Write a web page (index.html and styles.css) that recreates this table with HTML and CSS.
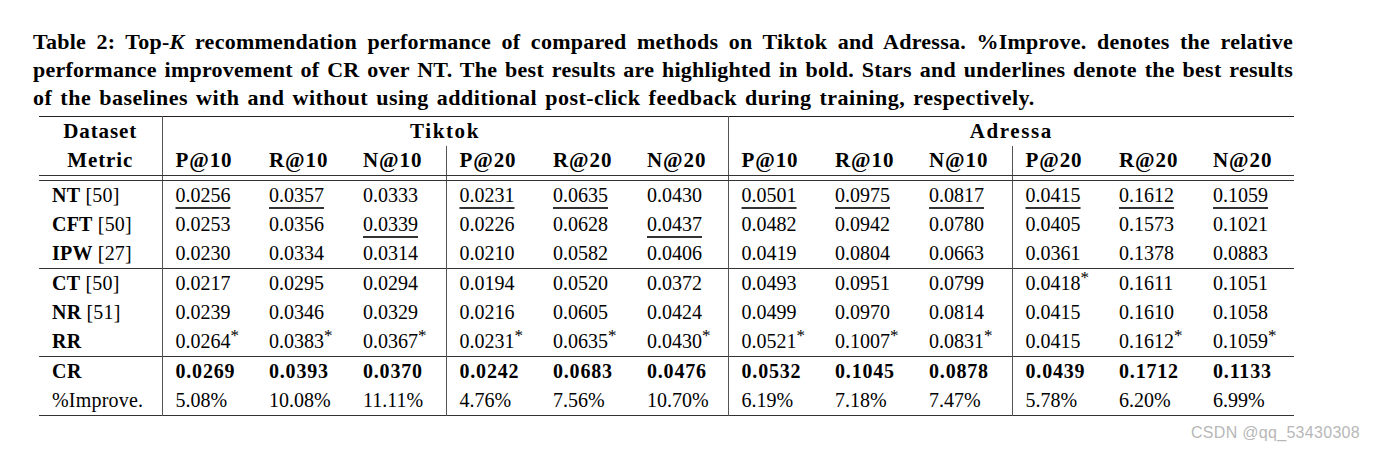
FILE: index.html
```html
<!DOCTYPE html>
<html>
<head>
<meta charset="utf-8">
<link rel="stylesheet" href="styles.css">
</head>
<body>
<div class="page">
  <div class="caption">
    <span class="cline just">Table 2: Top-<i>K</i> recommendation performance of compared methods on Tiktok and Adressa. %Improve. denotes the relative</span>
    <span class="cline just">performance improvement of CR over NT. The best results are highlighted in bold. Stars and underlines denote the best results</span>
    <span class="cline last">of the baselines with and without using additional post-click feedback during training, respectively.</span>
  </div>
  <table class="res">
    <colgroup>
      <col class="c0"><col class="cw"><col class="cw"><col class="cx"><col class="cw"><col class="cw"><col class="cw"><col class="cw"><col class="cw"><col class="cx"><col class="cw"><col class="cw"><col class="cw">
    </colgroup>
    <thead>
      <tr class="h1">
        <th class="lab vr">Dataset</th>
        <th colspan="6" class="grp vr">Tiktok</th>
        <th colspan="6" class="grp">Adressa</th>
      </tr>
      <tr class="h2">
        <th class="lab vr">Metric</th>
        <th>P@10</th><th>R@10</th><th class="vr">N@10</th>
        <th>P@20</th><th>R@20</th><th class="vr">N@20</th>
        <th>P@10</th><th>R@10</th><th class="vr">N@10</th>
        <th>P@20</th><th>R@20</th><th>N@20</th>
      </tr>
      <tr class="gap">
        <td class="vr"></td><td></td><td></td><td class="vr"></td><td></td><td></td><td class="vr"></td><td></td><td></td><td class="vr"></td><td></td><td></td><td></td>
      </tr>
    </thead>
    <tbody class="grp1">
      <tr>
        <td class="name vr"><b>NT</b> [50]</td>
        <td><u>0.0256</u></td><td><u>0.0357</u></td><td class="vr">0.0333</td>
        <td><u>0.0231</u></td><td><u>0.0635</u></td><td class="vr">0.0430</td>
        <td><u>0.0501</u></td><td><u>0.0975</u></td><td class="vr"><u>0.0817</u></td>
        <td><u>0.0415</u></td><td><u>0.1612</u></td><td><u>0.1059</u></td>
      </tr>
      <tr>
        <td class="name vr"><b>CFT</b> [50]</td>
        <td>0.0253</td><td>0.0356</td><td class="vr"><u>0.0339</u></td>
        <td>0.0226</td><td>0.0628</td><td class="vr"><u>0.0437</u></td>
        <td>0.0482</td><td>0.0942</td><td class="vr">0.0780</td>
        <td>0.0405</td><td>0.1573</td><td>0.1021</td>
      </tr>
      <tr>
        <td class="name vr"><b>IPW</b> [27]</td>
        <td>0.0230</td><td>0.0334</td><td class="vr">0.0314</td>
        <td>0.0210</td><td>0.0582</td><td class="vr">0.0406</td>
        <td>0.0419</td><td>0.0804</td><td class="vr">0.0663</td>
        <td>0.0361</td><td>0.1378</td><td>0.0883</td>
      </tr>
    </tbody>
    <tbody class="grp2">
      <tr>
        <td class="name vr"><b>CT</b> [50]</td>
        <td>0.0217</td><td>0.0295</td><td class="vr">0.0294</td>
        <td>0.0194</td><td>0.0520</td><td class="vr">0.0372</td>
        <td>0.0493</td><td>0.0951</td><td class="vr">0.0799</td>
        <td>0.0418<sup>*</sup></td><td>0.1611</td><td>0.1051</td>
      </tr>
      <tr>
        <td class="name vr"><b>NR</b> [51]</td>
        <td>0.0239</td><td>0.0346</td><td class="vr">0.0329</td>
        <td>0.0216</td><td>0.0605</td><td class="vr">0.0424</td>
        <td>0.0499</td><td>0.0970</td><td class="vr">0.0814</td>
        <td>0.0415</td><td>0.1610</td><td>0.1058</td>
      </tr>
      <tr>
        <td class="name vr"><b>RR</b></td>
        <td>0.0264<sup>*</sup></td><td>0.0383<sup>*</sup></td><td class="vr">0.0367<sup>*</sup></td>
        <td>0.0231<sup>*</sup></td><td>0.0635<sup>*</sup></td><td class="vr">0.0430<sup>*</sup></td>
        <td>0.0521<sup>*</sup></td><td>0.1007<sup>*</sup></td><td class="vr">0.0831<sup>*</sup></td>
        <td>0.0415</td><td>0.1612<sup>*</sup></td><td>0.1059<sup>*</sup></td>
      </tr>
    </tbody>
    <tbody class="grp3">
      <tr class="best">
        <td class="name vr">CR</td>
        <td>0.0269</td><td>0.0393</td><td class="vr">0.0370</td>
        <td>0.0242</td><td>0.0683</td><td class="vr">0.0476</td>
        <td>0.0532</td><td>0.1045</td><td class="vr">0.0878</td>
        <td>0.0439</td><td>0.1712</td><td>0.1133</td>
      </tr>
      <tr>
        <td class="name vr">%Improve.</td>
        <td>5.08%</td><td>10.08%</td><td class="vr">11.11%</td>
        <td>4.76%</td><td>7.56%</td><td class="vr">10.70%</td>
        <td>6.19%</td><td>7.18%</td><td class="vr">7.47%</td>
        <td>5.78%</td><td>6.20%</td><td>6.99%</td>
      </tr>
    </tbody>
  </table>
  <div class="mark">CSDN @qq_53430308</div>
</div>
</body>
</html>
```
FILE: styles.css
```css
html, body {
  margin: 0;
  padding: 0;
  background: #fff;
}
.page {
  position: relative;
  width: 1375px;
  height: 451px;
  overflow: hidden;
  font-family: "Liberation Serif", "Times New Roman", serif;
  color: #000;
}
.caption {
  padding: 28px 0 0 33px;
  width: 1260px;
  font-weight: bold;
  font-size: 22px;
  line-height: 28px;
  letter-spacing: 0.25px;
  word-spacing: 0;
}
.cline {
  display: block;
  white-space: nowrap;
}
.cline.just {
  text-align: justify;
  text-align-last: justify;
}
.cline.last {
  letter-spacing: 0.5px;
  word-spacing: 2px;
}
.res {
  margin: 4px 0 0 39px;
  border-collapse: collapse;
  table-layout: fixed;
  width: 1255px;
  font-size: 20px;
  border-top: 1.5px solid #222;
  border-bottom: 1.5px solid #333;
}
col.c0 { width: 123px; }
col.cw { width: 94px; }
col.cx { width: 96px; }
.res th, .res td {
  padding: 0 0 0 13px;
  text-align: left;
  white-space: nowrap;
  height: 29px;
  line-height: 29px;
  vertical-align: middle;
}
.res th {
  font-weight: bold;
  font-size: 21px;
  letter-spacing: 0.9px;
}
.res th.lab, .res th.grp {
  text-align: center;
  padding: 0;
}
.res th.grp { letter-spacing: 1.6px; }
.res .vr { border-right: 1px solid #555; }
.res tr.h1 th { height: 28px; }
.res tr.h2 th { height: 29px; border-bottom: 1px solid #333; }
.res tr.gap td { height: 4px; padding: 0; line-height: 4px; border-bottom: 1px solid #333; }
.res tbody.grp1 td { height: 29px; }
.res tbody.grp2 { border-top: 1px solid #333; }
.res tbody.grp2 td { height: 29px; }
.res tbody.grp3 { border-top: 1px solid #333; }
.res tr.best td { font-weight: bold; letter-spacing: 0.8px; }
.res td.name { letter-spacing: 0.2px; }
.res tr.best td.name { letter-spacing: 0.6px; }
.res td.name b { font-weight: bold; }
.res u {
  text-decoration: underline;
  text-decoration-thickness: 1.5px;
  text-underline-offset: 5px;
  text-decoration-color: #333;
}
.res sup {
  font-size: 17px;
  line-height: 0;
  vertical-align: 7px;
}
.mark {
  position: absolute;
  right: 15px;
  top: 424px;
  font-family: "Liberation Sans", Arial, sans-serif;
  font-size: 16px;
  color: #b8b8b8;
  letter-spacing: 0.3px;
}
```
